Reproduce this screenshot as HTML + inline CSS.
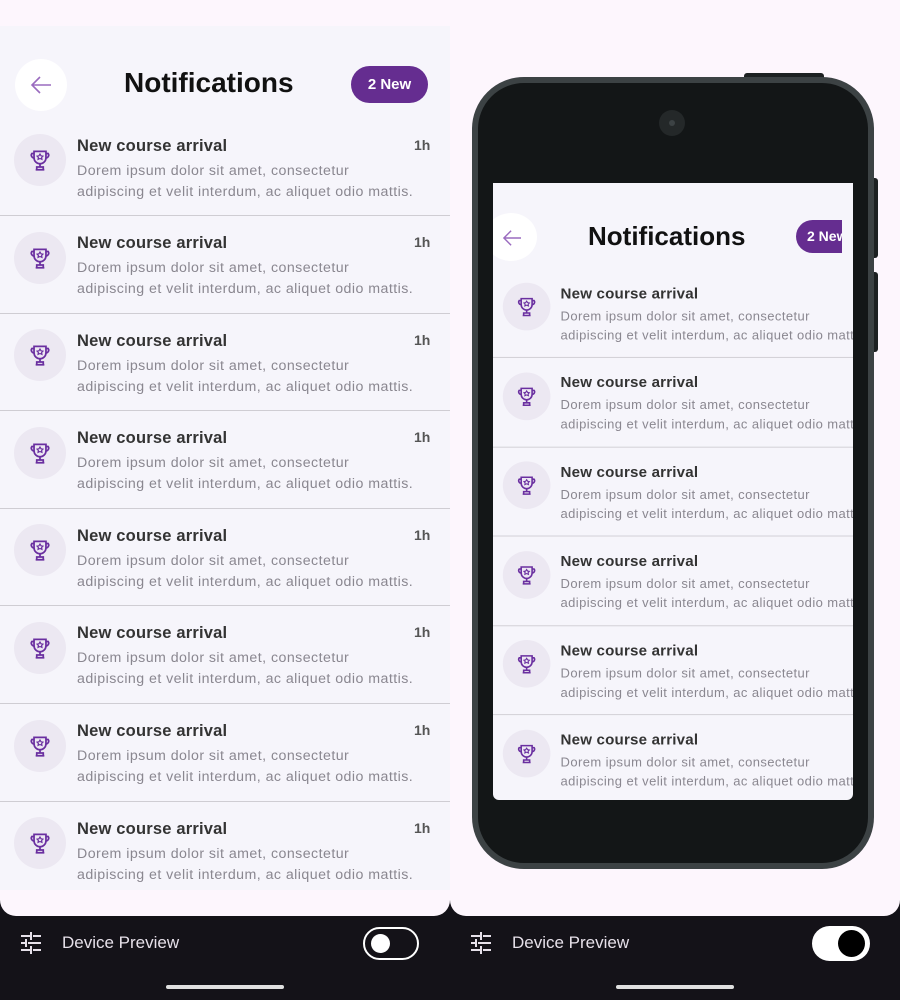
<!DOCTYPE html>
<html><head><meta charset="utf-8"><style>
*{margin:0;padding:0;box-sizing:border-box}
body{width:900px;height:1000px;background:#141218;position:relative;overflow:hidden;font-family:"Liberation Sans",sans-serif}
.panel{position:absolute;top:0;height:916px;background:#fdf6fd;border-radius:0 0 16px 16px;overflow:hidden}
.app{position:absolute;left:0;top:26px;width:450px;height:864px;background:#f6f5fb}
.list{position:absolute;left:0;width:450px}
.item{position:relative;height:97.6px;border-bottom:1.5px solid #cfcdd3}
.ic{position:absolute;left:14px;top:15.5px;width:52px;height:52px;border-radius:50%;background:#ece8f2;display:flex;align-items:center;justify-content:center}
.t{position:absolute;left:77px;top:18px;font-size:16.5px;font-weight:bold;color:#333;letter-spacing:.2px}
.d{position:absolute;left:77px;top:42px;font-size:14.2px;color:#8a8790;line-height:21px;white-space:nowrap;letter-spacing:.45px}
.h{position:absolute;left:414px;top:18px;font-size:14px;font-weight:bold;color:#555}
.back{position:absolute;border-radius:50%;background:#fff}
.title{position:absolute;font-size:28px;font-weight:bold;color:#111}
.badge{position:absolute;background:#652d90;color:#fff;font-weight:bold;border-radius:20px;white-space:nowrap}
.lbl{position:absolute;left:62px;top:933px;font-size:17px;color:#e6e0e9}
.home{position:absolute;top:985px;width:118px;height:4px;border-radius:2px;background:#e0e0e0}
</style></head><body>

<div class="panel" style="left:0;width:450px">
 <div class="app">
  <div class="back" style="left:15px;top:33px;width:52px;height:52px"></div>
  <svg style="position:absolute;left:29px;top:49px" width="24" height="20" viewBox="0 0 24 20"><path d="M22 10H3M11 2L3 10l8 8" fill="none" stroke="#9a6bbf" stroke-width="1.6"/></svg>
  <div class="title" style="left:124px;top:41px">Notifications</div>
  <div class="badge" style="left:351px;top:40px;width:77px;height:37px;font-size:15px;line-height:37px;text-align:center">2 New</div>
 </div>
 <div class="list" style="top:118.5px">
  <div class="item"><div class="ic"><svg width="26" height="26" viewBox="0 0 24 24" fill="none" stroke="#6a2fa0" stroke-width="1.6"><path d="M6.5 4h11v6a5.5 5.5 0 0 1-11 0z"/><path d="M6.5 6H4.5a2.5 2.5 0 0 0 2.3 4M17.5 6h2a2.5 2.5 0 0 1-2.3 4"/><path d="M12 15.5v3M8 21h8M9 18.5h6v2.5H9z"/><path d="M12 6.5l1 1.6 1.7.3-1.2 1.3.3 1.7-1.8-.8-1.8.8.3-1.7-1.2-1.3 1.7-.3z" stroke-width="1.1"/></svg></div><div class="t">New course arrival</div><div class="h">1h</div><div class="d">Dorem ipsum dolor sit amet, consectetur<br>adipiscing et velit interdum, ac aliquet odio mattis.</div></div>
  <div class="item"><div class="ic"><svg width="26" height="26" viewBox="0 0 24 24" fill="none" stroke="#6a2fa0" stroke-width="1.6"><path d="M6.5 4h11v6a5.5 5.5 0 0 1-11 0z"/><path d="M6.5 6H4.5a2.5 2.5 0 0 0 2.3 4M17.5 6h2a2.5 2.5 0 0 1-2.3 4"/><path d="M12 15.5v3M8 21h8M9 18.5h6v2.5H9z"/><path d="M12 6.5l1 1.6 1.7.3-1.2 1.3.3 1.7-1.8-.8-1.8.8.3-1.7-1.2-1.3 1.7-.3z" stroke-width="1.1"/></svg></div><div class="t">New course arrival</div><div class="h">1h</div><div class="d">Dorem ipsum dolor sit amet, consectetur<br>adipiscing et velit interdum, ac aliquet odio mattis.</div></div>
  <div class="item"><div class="ic"><svg width="26" height="26" viewBox="0 0 24 24" fill="none" stroke="#6a2fa0" stroke-width="1.6"><path d="M6.5 4h11v6a5.5 5.5 0 0 1-11 0z"/><path d="M6.5 6H4.5a2.5 2.5 0 0 0 2.3 4M17.5 6h2a2.5 2.5 0 0 1-2.3 4"/><path d="M12 15.5v3M8 21h8M9 18.5h6v2.5H9z"/><path d="M12 6.5l1 1.6 1.7.3-1.2 1.3.3 1.7-1.8-.8-1.8.8.3-1.7-1.2-1.3 1.7-.3z" stroke-width="1.1"/></svg></div><div class="t">New course arrival</div><div class="h">1h</div><div class="d">Dorem ipsum dolor sit amet, consectetur<br>adipiscing et velit interdum, ac aliquet odio mattis.</div></div>
  <div class="item"><div class="ic"><svg width="26" height="26" viewBox="0 0 24 24" fill="none" stroke="#6a2fa0" stroke-width="1.6"><path d="M6.5 4h11v6a5.5 5.5 0 0 1-11 0z"/><path d="M6.5 6H4.5a2.5 2.5 0 0 0 2.3 4M17.5 6h2a2.5 2.5 0 0 1-2.3 4"/><path d="M12 15.5v3M8 21h8M9 18.5h6v2.5H9z"/><path d="M12 6.5l1 1.6 1.7.3-1.2 1.3.3 1.7-1.8-.8-1.8.8.3-1.7-1.2-1.3 1.7-.3z" stroke-width="1.1"/></svg></div><div class="t">New course arrival</div><div class="h">1h</div><div class="d">Dorem ipsum dolor sit amet, consectetur<br>adipiscing et velit interdum, ac aliquet odio mattis.</div></div>
  <div class="item"><div class="ic"><svg width="26" height="26" viewBox="0 0 24 24" fill="none" stroke="#6a2fa0" stroke-width="1.6"><path d="M6.5 4h11v6a5.5 5.5 0 0 1-11 0z"/><path d="M6.5 6H4.5a2.5 2.5 0 0 0 2.3 4M17.5 6h2a2.5 2.5 0 0 1-2.3 4"/><path d="M12 15.5v3M8 21h8M9 18.5h6v2.5H9z"/><path d="M12 6.5l1 1.6 1.7.3-1.2 1.3.3 1.7-1.8-.8-1.8.8.3-1.7-1.2-1.3 1.7-.3z" stroke-width="1.1"/></svg></div><div class="t">New course arrival</div><div class="h">1h</div><div class="d">Dorem ipsum dolor sit amet, consectetur<br>adipiscing et velit interdum, ac aliquet odio mattis.</div></div>
  <div class="item"><div class="ic"><svg width="26" height="26" viewBox="0 0 24 24" fill="none" stroke="#6a2fa0" stroke-width="1.6"><path d="M6.5 4h11v6a5.5 5.5 0 0 1-11 0z"/><path d="M6.5 6H4.5a2.5 2.5 0 0 0 2.3 4M17.5 6h2a2.5 2.5 0 0 1-2.3 4"/><path d="M12 15.5v3M8 21h8M9 18.5h6v2.5H9z"/><path d="M12 6.5l1 1.6 1.7.3-1.2 1.3.3 1.7-1.8-.8-1.8.8.3-1.7-1.2-1.3 1.7-.3z" stroke-width="1.1"/></svg></div><div class="t">New course arrival</div><div class="h">1h</div><div class="d">Dorem ipsum dolor sit amet, consectetur<br>adipiscing et velit interdum, ac aliquet odio mattis.</div></div>
  <div class="item"><div class="ic"><svg width="26" height="26" viewBox="0 0 24 24" fill="none" stroke="#6a2fa0" stroke-width="1.6"><path d="M6.5 4h11v6a5.5 5.5 0 0 1-11 0z"/><path d="M6.5 6H4.5a2.5 2.5 0 0 0 2.3 4M17.5 6h2a2.5 2.5 0 0 1-2.3 4"/><path d="M12 15.5v3M8 21h8M9 18.5h6v2.5H9z"/><path d="M12 6.5l1 1.6 1.7.3-1.2 1.3.3 1.7-1.8-.8-1.8.8.3-1.7-1.2-1.3 1.7-.3z" stroke-width="1.1"/></svg></div><div class="t">New course arrival</div><div class="h">1h</div><div class="d">Dorem ipsum dolor sit amet, consectetur<br>adipiscing et velit interdum, ac aliquet odio mattis.</div></div>
  <div class="item" style="border-bottom:none"><div class="ic"><svg width="26" height="26" viewBox="0 0 24 24" fill="none" stroke="#6a2fa0" stroke-width="1.6"><path d="M6.5 4h11v6a5.5 5.5 0 0 1-11 0z"/><path d="M6.5 6H4.5a2.5 2.5 0 0 0 2.3 4M17.5 6h2a2.5 2.5 0 0 1-2.3 4"/><path d="M12 15.5v3M8 21h8M9 18.5h6v2.5H9z"/><path d="M12 6.5l1 1.6 1.7.3-1.2 1.3.3 1.7-1.8-.8-1.8.8.3-1.7-1.2-1.3 1.7-.3z" stroke-width="1.1"/></svg></div><div class="t">New course arrival</div><div class="h">1h</div><div class="d">Dorem ipsum dolor sit amet, consectetur<br>adipiscing et velit interdum, ac aliquet odio mattis.</div></div>
 </div>
</div>

<div class="panel" style="left:450px;width:450px">
 <div style="position:absolute;left:294px;top:73px;width:80px;height:8px;background:#1d2122;border-radius:3px"></div>
 <div style="position:absolute;left:420px;top:178px;width:8px;height:80px;background:#1d2122;border-radius:3px"></div>
 <div style="position:absolute;left:420px;top:272px;width:8px;height:80px;background:#1d2122;border-radius:3px"></div>
 <div style="position:absolute;left:22px;top:77px;width:402px;height:792px;border-radius:52px;background:#131617;border:6px solid #3c4244"></div>
 <div style="position:absolute;left:209px;top:110px;width:26px;height:26px;border-radius:50%;background:#242829"></div>
 <div style="position:absolute;left:219px;top:120px;width:6px;height:6px;border-radius:50%;background:#3c4244"></div>
 <div style="position:absolute;left:43px;top:183px;width:360px;height:617px;background:#f6f5fb;border-radius:0 0 6px 6px;overflow:hidden">
  <div class="back" style="left:-8px;top:30px;width:52px;height:48px"></div>
  <svg style="position:absolute;left:8px;top:46px" width="22" height="18" viewBox="0 0 24 20"><path d="M22 10H3M11 2L3 10l8 8" fill="none" stroke="#9a6bbf" stroke-width="1.6"/></svg>
  <div class="title" style="left:95px;top:38px;font-size:26px">Notifications</div>
  <div style="position:absolute;left:303px;top:37px;width:46px;height:33px;overflow:hidden">
   <div class="badge" style="left:0;top:0;width:70px;height:33px;font-size:14px;line-height:33px;padding-left:11px">2 New</div>
  </div>
  <div style="position:absolute;left:-3px;top:-23px;width:450px;transform:scale(0.916);transform-origin:0 0">
   <div class="list" style="top:118.5px">
    <div class="item"><div class="ic"><svg width="26" height="26" viewBox="0 0 24 24" fill="none" stroke="#6a2fa0" stroke-width="1.6"><path d="M6.5 4h11v6a5.5 5.5 0 0 1-11 0z"/><path d="M6.5 6H4.5a2.5 2.5 0 0 0 2.3 4M17.5 6h2a2.5 2.5 0 0 1-2.3 4"/><path d="M12 15.5v3M8 21h8M9 18.5h6v2.5H9z"/><path d="M12 6.5l1 1.6 1.7.3-1.2 1.3.3 1.7-1.8-.8-1.8.8.3-1.7-1.2-1.3 1.7-.3z" stroke-width="1.1"/></svg></div><div class="t">New course arrival</div><div class="d">Dorem ipsum dolor sit amet, consectetur<br>adipiscing et velit interdum, ac aliquet odio mattis.</div></div>
    <div class="item"><div class="ic"><svg width="26" height="26" viewBox="0 0 24 24" fill="none" stroke="#6a2fa0" stroke-width="1.6"><path d="M6.5 4h11v6a5.5 5.5 0 0 1-11 0z"/><path d="M6.5 6H4.5a2.5 2.5 0 0 0 2.3 4M17.5 6h2a2.5 2.5 0 0 1-2.3 4"/><path d="M12 15.5v3M8 21h8M9 18.5h6v2.5H9z"/><path d="M12 6.5l1 1.6 1.7.3-1.2 1.3.3 1.7-1.8-.8-1.8.8.3-1.7-1.2-1.3 1.7-.3z" stroke-width="1.1"/></svg></div><div class="t">New course arrival</div><div class="d">Dorem ipsum dolor sit amet, consectetur<br>adipiscing et velit interdum, ac aliquet odio mattis.</div></div>
    <div class="item"><div class="ic"><svg width="26" height="26" viewBox="0 0 24 24" fill="none" stroke="#6a2fa0" stroke-width="1.6"><path d="M6.5 4h11v6a5.5 5.5 0 0 1-11 0z"/><path d="M6.5 6H4.5a2.5 2.5 0 0 0 2.3 4M17.5 6h2a2.5 2.5 0 0 1-2.3 4"/><path d="M12 15.5v3M8 21h8M9 18.5h6v2.5H9z"/><path d="M12 6.5l1 1.6 1.7.3-1.2 1.3.3 1.7-1.8-.8-1.8.8.3-1.7-1.2-1.3 1.7-.3z" stroke-width="1.1"/></svg></div><div class="t">New course arrival</div><div class="d">Dorem ipsum dolor sit amet, consectetur<br>adipiscing et velit interdum, ac aliquet odio mattis.</div></div>
    <div class="item"><div class="ic"><svg width="26" height="26" viewBox="0 0 24 24" fill="none" stroke="#6a2fa0" stroke-width="1.6"><path d="M6.5 4h11v6a5.5 5.5 0 0 1-11 0z"/><path d="M6.5 6H4.5a2.5 2.5 0 0 0 2.3 4M17.5 6h2a2.5 2.5 0 0 1-2.3 4"/><path d="M12 15.5v3M8 21h8M9 18.5h6v2.5H9z"/><path d="M12 6.5l1 1.6 1.7.3-1.2 1.3.3 1.7-1.8-.8-1.8.8.3-1.7-1.2-1.3 1.7-.3z" stroke-width="1.1"/></svg></div><div class="t">New course arrival</div><div class="d">Dorem ipsum dolor sit amet, consectetur<br>adipiscing et velit interdum, ac aliquet odio mattis.</div></div>
    <div class="item"><div class="ic"><svg width="26" height="26" viewBox="0 0 24 24" fill="none" stroke="#6a2fa0" stroke-width="1.6"><path d="M6.5 4h11v6a5.5 5.5 0 0 1-11 0z"/><path d="M6.5 6H4.5a2.5 2.5 0 0 0 2.3 4M17.5 6h2a2.5 2.5 0 0 1-2.3 4"/><path d="M12 15.5v3M8 21h8M9 18.5h6v2.5H9z"/><path d="M12 6.5l1 1.6 1.7.3-1.2 1.3.3 1.7-1.8-.8-1.8.8.3-1.7-1.2-1.3 1.7-.3z" stroke-width="1.1"/></svg></div><div class="t">New course arrival</div><div class="d">Dorem ipsum dolor sit amet, consectetur<br>adipiscing et velit interdum, ac aliquet odio mattis.</div></div>
    <div class="item" style="border-bottom:none"><div class="ic"><svg width="26" height="26" viewBox="0 0 24 24" fill="none" stroke="#6a2fa0" stroke-width="1.6"><path d="M6.5 4h11v6a5.5 5.5 0 0 1-11 0z"/><path d="M6.5 6H4.5a2.5 2.5 0 0 0 2.3 4M17.5 6h2a2.5 2.5 0 0 1-2.3 4"/><path d="M12 15.5v3M8 21h8M9 18.5h6v2.5H9z"/><path d="M12 6.5l1 1.6 1.7.3-1.2 1.3.3 1.7-1.8-.8-1.8.8.3-1.7-1.2-1.3 1.7-.3z" stroke-width="1.1"/></svg></div><div class="t">New course arrival</div><div class="d">Dorem ipsum dolor sit amet, consectetur<br>adipiscing et velit interdum, ac aliquet odio mattis.</div></div>
   </div>
  </div>
 </div>
</div>

<svg style="position:absolute;left:20px;top:932px" width="22" height="22" viewBox="0 0 22 22" fill="#e6e0e9"><rect x="1" y="3" width="9" height="2"/><rect x="13" y="3" width="8" height="2"/><rect x="10" y="0" width="2" height="8"/><rect x="1" y="10" width="4" height="2"/><rect x="8" y="10" width="13" height="2"/><rect x="5" y="7" width="2" height="8"/><rect x="1" y="17" width="9" height="2"/><rect x="13" y="17" width="8" height="2"/><rect x="10" y="14" width="2" height="8"/></svg>
<div class="lbl">Device Preview</div>
<div style="position:absolute;left:363px;top:927px;width:56px;height:33px;border:2px solid #fff;border-radius:17px"></div>
<div style="position:absolute;left:371px;top:934px;width:19px;height:19px;border-radius:50%;background:#fff"></div>
<div class="home" style="left:166px"></div>

<svg style="position:absolute;left:470px;top:932px" width="22" height="22" viewBox="0 0 22 22" fill="#e6e0e9"><rect x="1" y="3" width="9" height="2"/><rect x="13" y="3" width="8" height="2"/><rect x="10" y="0" width="2" height="8"/><rect x="1" y="10" width="4" height="2"/><rect x="8" y="10" width="13" height="2"/><rect x="5" y="7" width="2" height="8"/><rect x="1" y="17" width="9" height="2"/><rect x="13" y="17" width="8" height="2"/><rect x="10" y="14" width="2" height="8"/></svg>
<div class="lbl" style="left:512px">Device Preview</div>
<div style="position:absolute;left:812px;top:926px;width:58px;height:35px;background:#fff;border-radius:18px"></div>
<div style="position:absolute;left:838px;top:930px;width:27px;height:27px;border-radius:50%;background:#000"></div>
<div class="home" style="left:616px"></div>
</body></html>
